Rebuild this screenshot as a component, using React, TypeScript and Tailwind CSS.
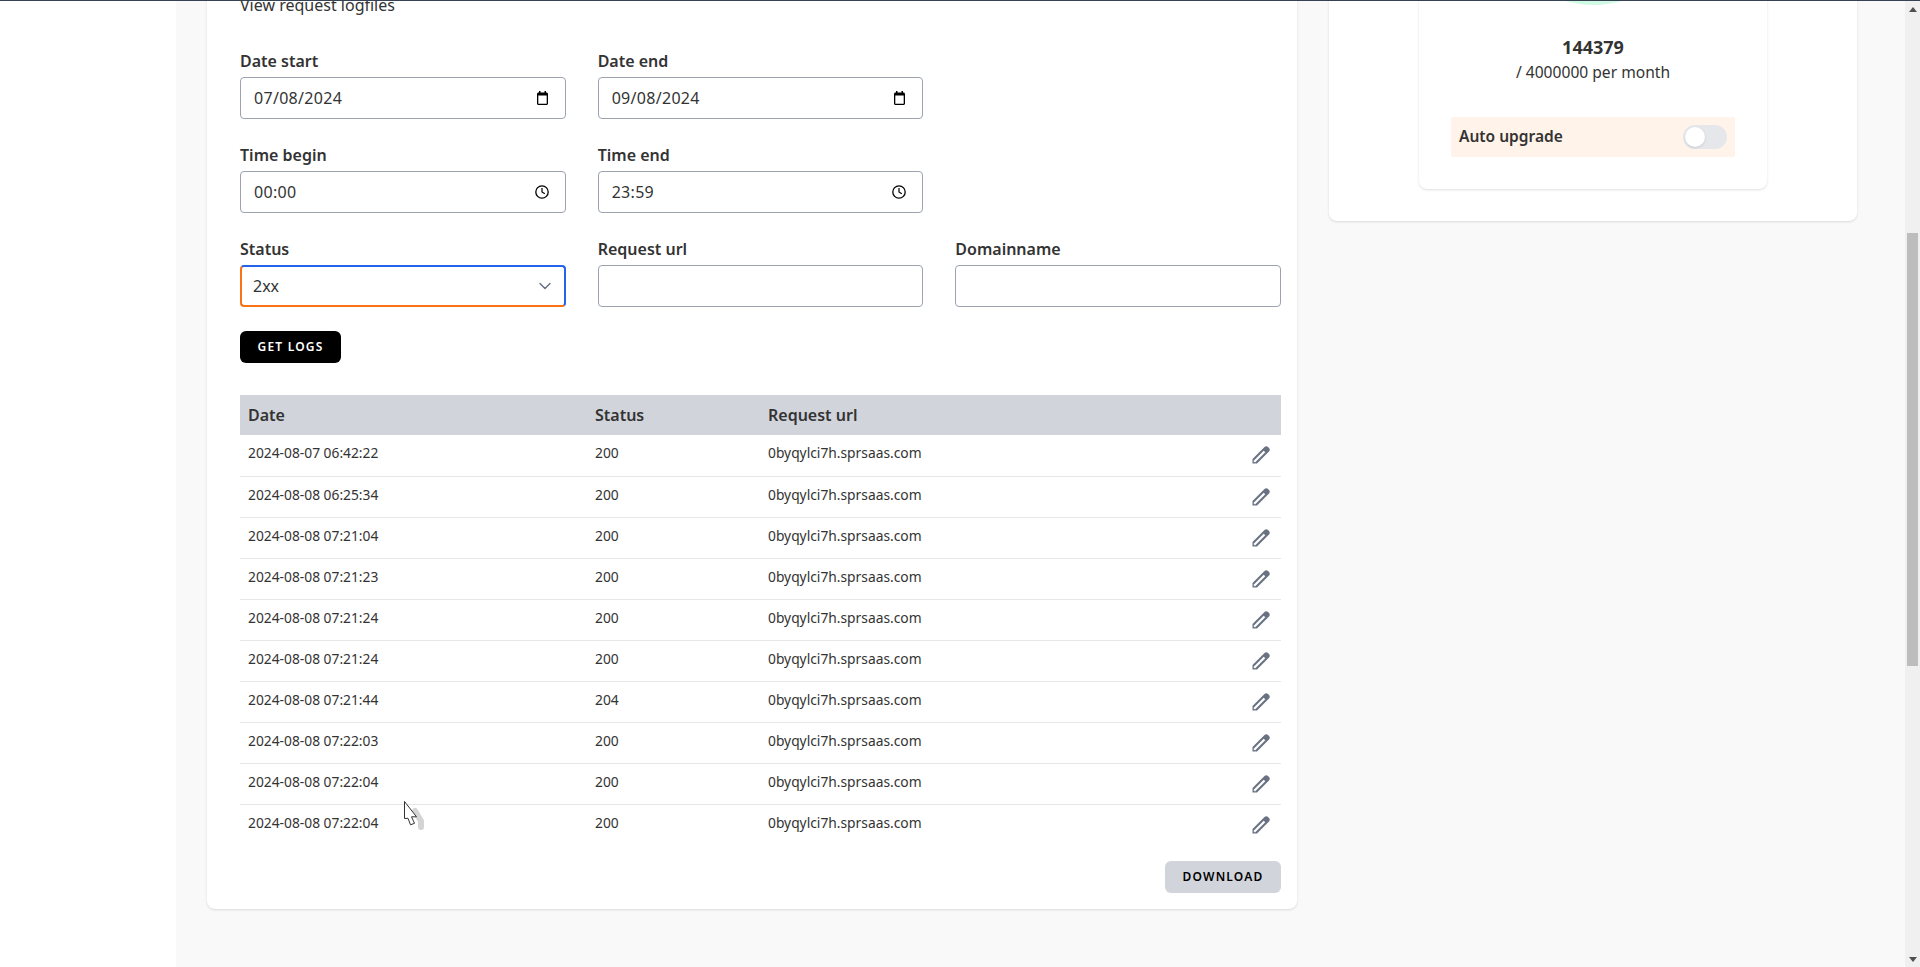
const rows = [
  ['2024-08-07 06:42:22', '200'],
  ['2024-08-08 06:25:34', '200'],
  ['2024-08-08 07:21:04', '200'],
  ['2024-08-08 07:21:23', '200'],
  ['2024-08-08 07:21:24', '200'],
  ['2024-08-08 07:21:24', '200'],
  ['2024-08-08 07:21:44', '204'],
  ['2024-08-08 07:22:03', '200'],
  ['2024-08-08 07:22:04', '200'],
  ['2024-08-08 07:22:04', '200'],
];

function CalendarIcon() {
  return (
    <svg width="11" height="14" viewBox="0 0 11 14" className="mr-[5px] shrink-0 text-black">
      <path fill="currentColor" fillRule="evenodd" d="M2 0h1.500v1.500h4V0H9v1.500h.5c.8 0 1.500.7 1.500 1.500v9.500c0 .8-.7 1.500-1.500 1.500h-8C.7 14 0 13.300 0 12.500V3c0-.8.7-1.500 1.500-1.500H2V0zM1.300 4.500v8.200h8.400V4.500H1.300z" />
    </svg>
  );
}

function ClockIcon() {
  return (
    <svg width="14" height="14" viewBox="0 0 14 14" fill="none" stroke="currentColor" className="mr-[4px] shrink-0 text-black">
      <circle cx="7" cy="7" r="6.200" strokeWidth="1.300" />
      <path d="M7 3v4l2.800 1.700" strokeWidth="1.200" />
    </svg>
  );
}

function PencilIcon() {
  return (
    <svg width="20" height="20" viewBox="0 0 20 20" className="text-gray-500">
      <path fill="currentColor" d="M1.500 18.500V14L13.500 2c1-1 2.500-1 3.500 0l1 1c1 1 1 2.500 0 3.500L6 18.500z" />
      <path d="M3.200 16.800L13.500 6.500" stroke="#fff" strokeWidth="2.200" />
    </svg>
  );
}

function Field({ label, value, icon }: { label: string; value?: string; icon?: React.ReactNode }) {
  return (
    <div>
      <label className="mb-[4px] block text-[16px] leading-[24px] font-semibold text-[#333]">{label}</label>
      <div className="flex h-[42px] items-center rounded-[4px] border border-[#9ca3af] bg-white pl-[13px] pr-[12px]">
        <input readOnly value={value ?? ''} className="min-w-0 flex-1 bg-transparent text-[16px] tracking-[0.3px] text-[#333] outline-none" />
        {icon}
      </div>
    </div>
  );
}

export default function App() {
  return (
    <div className="relative flex h-[967px] w-full flex-col overflow-hidden bg-white text-[#333] [font-family:'Noto_Sans',sans-serif]">
      <div className="relative z-10 h-px shrink-0 bg-gray-700" />
      <div className="flex min-h-0 flex-1">
        <div className="w-[176px] shrink-0 bg-white" />
        <main className="flex min-w-0 flex-1 items-start gap-[32px] bg-[#f9f9f9] pl-[31px]">
          {/* logs card, page is scrolled so the top is cut off */}
          <section className="-mt-[8px] w-[1090px] shrink-0 rounded-b-lg bg-white pb-[16px] pl-[33px] pr-[16px] shadow-sm">
            <p className="text-[16px] leading-[24px]">View request logfiles</p>
            <div className="mt-[32px] grid grid-cols-3 gap-x-[32px] gap-y-[24px]">
              <Field label="Date start" value="07/08/2024" icon={<CalendarIcon />} />
              <Field label="Date end" value="09/08/2024" icon={<CalendarIcon />} />
              <div />
              <Field label="Time begin" value="00:00" icon={<ClockIcon />} />
              <Field label="Time end" value="23:59" icon={<ClockIcon />} />
              <div />
              <div>
                <label className="mb-[4px] block text-[16px] leading-[24px] font-semibold text-[#333]">Status</label>
                <div className="flex h-[42px] items-center rounded-[4px] border-2 border-b-[#f97316] border-l-[#f97316] border-r-[#2563eb] border-t-[#2563eb] bg-white pl-[11px] pr-[9px]">
                  <select defaultValue="2xx" className="min-w-0 flex-1 appearance-none bg-transparent text-[16px] text-[#333] outline-none">
                    <option>2xx</option>
                  </select>
                  <svg width="20" height="20" viewBox="0 0 20 20" fill="none" className="shrink-0 text-gray-500">
                    <path d="M5 7.500l5 5 5-5" stroke="currentColor" strokeWidth="1.500" strokeLinecap="round" strokeLinejoin="round" />
                  </svg>
                </div>
              </div>
              <Field label="Request url" />
              <Field label="Domainname" />
            </div>
            <button className="mt-[24px] block h-[32px] w-[101px] rounded-[6px] bg-black text-[12px] font-semibold tracking-[1.2px] text-white">GET LOGS</button>

            <table className="mt-[32px] w-full table-fixed border-collapse text-left">
              <thead>
                <tr className="h-[40px] bg-[#d1d5db] text-[16px] font-semibold">
                  <th className="w-[347px] px-[8px] font-semibold">Date</th>
                  <th className="w-[173px] px-[8px] font-semibold">Status</th>
                  <th className="px-[8px] font-semibold">Request url</th>
                  <th className="w-[60px]" />
                </tr>
              </thead>
              <tbody>
                {rows.map((r, i) => (
                  <tr key={i} className="h-[41px] border-b border-gray-200 text-[13.800px] last:border-b-0">
                    <td className="px-[8px] pb-[3px]">{r[0]}</td>
                    <td className="px-[8px] pb-[3px]">{r[1]}</td>
                    <td className="px-[8px] pb-[3px]">0byqylci7h.sprsaas.com</td>
                    <td className="pr-[10px]">
                      <div className="flex justify-end"><PencilIcon /></div>
                    </td>
                  </tr>
                ))}
              </tbody>
            </table>

            <div className="mt-[16px] flex justify-end">
              <button className="h-[32px] w-[116px] rounded-[6px] bg-[#d1d5db] text-[12px] font-semibold tracking-[1.2px] text-black">DOWNLOAD</button>
            </div>
          </section>

          {/* plan card */}
          <aside className="-mt-[40px] w-[528px] shrink-0 rounded-b-lg bg-white px-[90px] pb-[32px] shadow-sm">
            <div className="rounded-b-lg bg-white px-[32px] pb-[32px] shadow">
              <div className="flex justify-center pt-[39px]">
                {/* bottom of the usage gauge */}
                <svg width="63" height="5" viewBox="0 0 63 5" className="block">
                  <path d="M0 0Q31.500 10 63 0z" fill="#d1fae5" />
                </svg>
              </div>
              <div className="mt-[30px] text-center text-[18px] leading-[24px] font-bold">144379</div>
              <div className="mt-px text-center text-[15.600px] leading-[24px]">/ 4000000 per month</div>
              <div className="mt-[33px] flex h-[40px] items-center justify-between rounded-[2px] bg-[#fff3ea] pl-[8px] pr-[8px]">
                <span className="text-[15.500px] font-semibold">Auto upgrade</span>
                <div className="flex h-[24px] w-[44px] items-center rounded-full bg-gray-200 pl-[2px]">
                  <div className="h-[20px] w-[20px] rounded-full bg-white shadow" />
                </div>
              </div>
            </div>
          </aside>
        </main>
        {/* scrollbar */}
        <div className="flex w-[15px] shrink-0 flex-col items-center bg-[#f0f0f0]">
          <div className="mt-[6px] h-0 w-0 border-x-[4px] border-b-[5px] border-x-transparent border-b-[#505050]" />
          <div className="mt-[221px] h-[433px] w-[11px] bg-[#bdbdbd]" />
          <div className="mt-auto mb-[5px] h-0 w-0 border-x-[4px] border-t-[5px] border-x-transparent border-t-[#505050]" />
        </div>
      </div>
      {/* mouse pointer with its shadow */}
      <svg width="24" height="30" viewBox="0 0 24 30" className="pointer-events-none absolute left-[404px] top-[801px]">
        <path d="M11 10L17 20V26" stroke="#d4d4d4" strokeWidth="6" strokeLinecap="round" fill="none" />
        <path d="M0.500 0.500V17.500l3.500-.2 2.500 6.500 4-1.500-3-6.500h5L0.500 0.500z" fill="#fff" stroke="#333" strokeWidth="1" />
      </svg>
    </div>
  );
}
